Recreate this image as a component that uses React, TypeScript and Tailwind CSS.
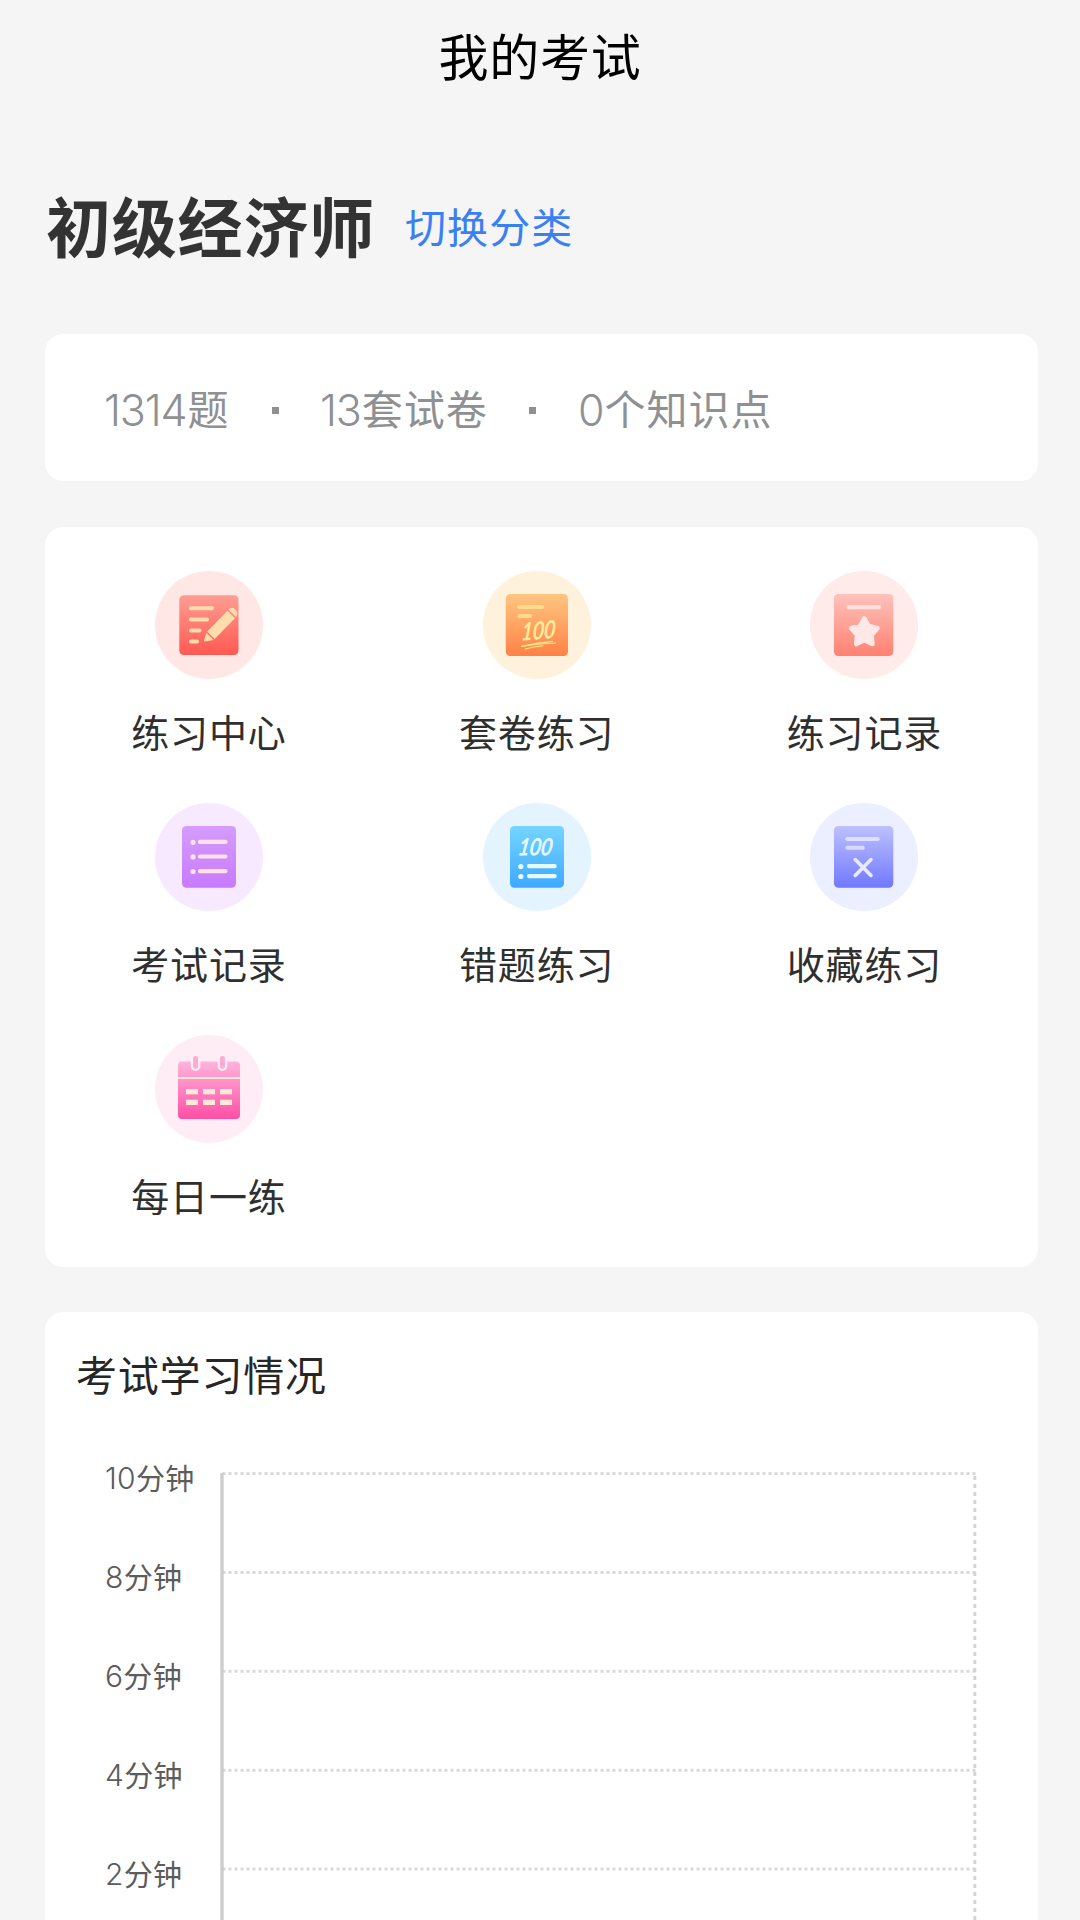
import type { ReactNode } from "react";

type IconProps = {
  id: string;
  bg: string;
  from: string;
  to: string;
  children: ReactNode;
};

const IconBase = ({ id, bg, from, to, children }: IconProps) => (
  <svg viewBox="0 0 108 108" className="size-[108px] shrink-0">
    <defs>
      <linearGradient id={id} x1="0" y1="0" x2="0" y2="1">
        <stop offset="0" stopColor={from} />
        <stop offset="1" stopColor={to} />
      </linearGradient>
    </defs>
    <circle cx="54" cy="54" r="54" fill={bg} />
    {children}
  </svg>
);

const PracticeIcon = () => (
  <IconBase id="practice" bg="#ffe7e5" from="#ff9d93" to="#ff5951">
    <rect x="24.3" y="24.3" width="59.2" height="59.7" rx="4.5" fill="url(#practice)" />
    <g fill="#ffdcab">
      <rect x="34" y="35.3" width="25" height="4" rx="1.8" />
      <rect x="34" y="46.6" width="20" height="4" rx="1.8" />
      <rect x="34" y="57.6" width="12.5" height="4" rx="1.8" />
      <rect x="34" y="68.6" width="10" height="4" rx="1.8" />
      <path d="M52.2 60.6 72.6 39.8 80 47.2 59.6 68z" />
      <path d="M51.4 61.8 58.6 69 49.8 70.4q-.9 0-.8-.9z" />
      <path d="M73.5 38.8l1.2-1.2q2.6-1.8 5.2.4t2.6 4.6q0 1.6-1.6 3.4z" />
    </g>
  </IconBase>
);

const PaperIcon = () => (
  <IconBase id="paper" bg="#fff2dd" from="#ffc681" to="#ff8245">
    <rect x="22.8" y="23" width="62.2" height="62" rx="4.5" fill="url(#paper)" />
    <rect x="34.3" y="34" width="26.8" height="4" rx="1.8" fill="#ffdc8d" />
    <rect x="34.3" y="43" width="14.7" height="4" rx="1.8" fill="#ffdc8d" />
    <text
      x="0"
      y="0"
      textLength="34"
      lengthAdjust="spacingAndGlyphs"
      transform="translate(38 69.2) rotate(-4) skewX(-9)"
      fill="#fff0a0"
      stroke="#fff0a0"
      strokeWidth=".6"
      className="font-['Lato'] text-[24px] italic"
    >
      100
    </text>
    <g fill="none" stroke="#ffe892" strokeWidth="1.1" strokeLinecap="round">
      <path d="M38.5 75.4Q53 71.8 69.5 70.4" />
      <path d="M38.5 75.4Q54 72.8 72.5 72" />
      <path d="M42.5 78Q50 75.6 60 74.8" />
    </g>
  </IconBase>
);

const RecordIcon = () => (
  <IconBase id="record" bg="#ffebe9" from="#ffc2ba" to="#ff8172">
    <rect x="24" y="23" width="59.3" height="62" rx="4.5" fill="url(#record)" />
    <rect x="36.7" y="34" width="34.3" height="4.2" rx="1.8" fill="#ffe0dc" />
    <path
      d="M54.3 47.6 58.4 55.2 67.2 57.2 61.4 64 62.2 72.8 54.3 69 46.4 72.8 47.2 64 41.4 57.2 50.2 55.2z"
      fill="#ffe8e5"
      stroke="#ffe8e5"
      strokeWidth="5"
      strokeLinejoin="round"
    />
  </IconBase>
);

const ExamIcon = () => (
  <IconBase id="exam" bg="#f7e9ff" from="#d59cfd" to="#c87afd">
    <rect x="27" y="23" width="54" height="61.7" rx="4.5" fill="url(#exam)" />
    <g fill="#ffe3e4">
      <circle cx="38" cy="39.3" r="2.6" />
      <circle cx="38" cy="53.9" r="2.6" />
      <circle cx="38" cy="68.5" r="2.6" />
      <rect x="43" y="36.8" width="29.4" height="4.2" rx="1.8" />
      <rect x="43" y="51.4" width="29.4" height="4.2" rx="1.8" />
      <rect x="43" y="66" width="29.4" height="4.2" rx="1.8" />
    </g>
  </IconBase>
);

const WrongIcon = () => (
  <IconBase id="wrong" bg="#e3f4ff" from="#75d5ff" to="#3ea9ff">
    <rect x="27" y="23" width="54" height="61.7" rx="4.5" fill="url(#wrong)" />
    <g fill="#e8faff">
      <text
        x="0"
        y="0"
        textLength="34"
        lengthAdjust="spacingAndGlyphs"
        transform="translate(34.4 52.2) skewX(-9)"
        stroke="#e8faff"
        strokeWidth=".8"
        className="font-['Lato'] text-[23px] italic"
      >
        100
      </text>
      <circle cx="37.8" cy="63.5" r="2.6" />
      <circle cx="37.8" cy="73.5" r="2.6" />
      <rect x="44" y="61" width="29.7" height="4.2" rx="1.8" />
      <rect x="44" y="71" width="29.7" height="4.2" rx="1.8" />
    </g>
  </IconBase>
);

const FavoriteIcon = () => (
  <IconBase id="favorite" bg="#ebefff" from="#bdc1ff" to="#7178ff">
    <rect x="24" y="23" width="59.3" height="61.7" rx="4.5" fill="url(#favorite)" />
    <rect x="35.3" y="34" width="34.3" height="4" rx="1.8" fill="#dde0ff" />
    <rect x="35.3" y="42.7" width="19.5" height="4" rx="1.8" fill="#d8dbff" />
    <path
      d="M45.2 56.6 61 72.4M61 56.6 45.2 72.4"
      stroke="#e8ebff"
      strokeWidth="3.6"
      strokeLinecap="round"
    />
  </IconBase>
);

const DailyIcon = () => (
  <IconBase id="daily" bg="#ffedf6" from="#ffb4dc" to="#ff4fa6">
    <rect x="23" y="26.5" width="62" height="57.5" rx="4" fill="url(#daily)" />
    <rect x="23" y="42" width="62" height="2" fill="#ffe9d0" />
    <g fill="#ffedf6">
      <path d="M35.8 26V31.2a4.8 4.8 0 0 0 9.6 0V26z" />
      <path d="M62.6 26V31.2a4.8 4.8 0 0 0 9.6 0V26z" />
    </g>
    <rect x="38.1" y="21" width="5" height="12.8" rx="2.5" fill="#ffa9d5" />
    <rect x="64.9" y="21" width="5" height="12.8" rx="2.5" fill="#ffa9d5" />
    <g fill="#ffe8d6">
      <rect x="31" y="54" width="12" height="5.3" />
      <rect x="48" y="54" width="12" height="5.3" />
      <rect x="65" y="54" width="12" height="5.3" />
      <rect x="31" y="64.7" width="12" height="5.3" />
      <rect x="48" y="64.7" width="12" height="5.3" />
      <rect x="65" y="64.7" width="12" height="5.3" />
    </g>
  </IconBase>
);

const menus = [
  { title: "练习中心", icon: <PracticeIcon /> },
  { title: "套卷练习", icon: <PaperIcon /> },
  { title: "练习记录", icon: <RecordIcon /> },
  { title: "考试记录", icon: <ExamIcon /> },
  { title: "错题练习", icon: <WrongIcon /> },
  { title: "收藏练习", icon: <FavoriteIcon /> },
  { title: "每日一练", icon: <DailyIcon /> },
];

const ticks = [10, 8, 6, 4, 2];

const Stat = ({ num, label }: { num: string; label: string }) => (
  <span className="flex items-center">
    <span className="pt-[5px] font-['Inter'] text-[43px] font-[350] tracking-[-1.1px]">{num}</span>
    <span className="pl-px">{label}</span>
  </span>
);

const Dot = () => <i className="mt-[5px] size-[7px] bg-[#8f9092]" />;

const Chart = () => (
  <div className="mt-[25px] flex">
    <div className="w-[175px] pl-[60px] text-[29px] tracking-[0.3px] text-[#5c5c5c]">
      {ticks.map((tick) => (
        <div key={tick} className="flex h-[99px] items-center whitespace-nowrap">
          <span className="pt-[2px] font-['Inter'] text-[30px]/[99px] font-[350]">{tick}</span>
          <span className="leading-[99px]">分钟</span>
        </div>
      ))}
    </div>
    <svg viewBox="0 0 760 500" className="mt-[42px] h-[500px] w-[760px]" fill="none">
      <g stroke="#d9d9d9" strokeWidth="3" strokeDasharray="3 3">
        {ticks.map((tick, i) => (
          <path key={tick} d={`M2.5 ${3.5 + i * 98.9}H756`} />
        ))}
      </g>
      <path d="M754.8 6V500" stroke="#d4d4d4" strokeWidth="3" strokeDasharray="4 4" />
      <path d="M2 3V500" stroke="#cdcdcd" strokeWidth="3.4" />
    </svg>
  </div>
);

const App = () => {
  return (
    <main className="h-[1920px] overflow-hidden bg-[#f5f5f5] pl-[45px] font-['Noto_Sans_CJK_SC',sans-serif]">
      <header className="-ml-[45px] flex h-[116px] justify-center text-[50px] leading-[108px] tracking-[0.8px] text-black">
        我的考试
      </header>

      <div className="flex h-[218px] items-center gap-[30px] pb-[2px]">
        <h1 className="pl-px text-[65px] leading-none font-bold tracking-[0.8px] text-[#333]">
          初级经济师
        </h1>
        <button className="pt-[2px] text-[41px] leading-none tracking-[1.1px] text-[#3b80f2]">
          切换分类
        </button>
      </div>

      <section className="flex h-[147px] w-[993px] items-center rounded-[18px] bg-white pl-[59px] text-[41px] leading-none tracking-[1px] text-[#8f9092]">
        <div className="flex w-[168px]"><Stat num="1314" label="题" /></div>
        <Dot />
        <div className="flex w-[250px] pl-[41px]"><Stat num="13" label="套试卷" /></div>
        <Dot />
        <div className="flex pl-[42px]"><Stat num="0" label="个知识点" /></div>
      </section>

      <section className="mt-[46px] h-[740px] w-[993px] rounded-[18px] bg-white pt-[44px]">
        <div className="grid w-[983.3px] grid-cols-3">
          {menus.map((menu) => (
            <div key={menu.title} className="flex h-[231.8px] flex-col items-center">
              {menu.icon}
              <span className="mt-[23px] text-[38px] leading-[57px] tracking-[0.8px] text-[#2f2f2f]">
                {menu.title}
              </span>
            </div>
          ))}
        </div>
      </section>

      <section className="mt-[45px] h-[700px] w-[993px] rounded-[18px] bg-white pt-[31px]">
        <h2 className="pl-[31px] text-[41px] leading-[60px] tracking-[0.8px] text-[#262626]">
          考试学习情况
        </h2>
        <Chart />
      </section>
    </main>
  );
};

export default App;
